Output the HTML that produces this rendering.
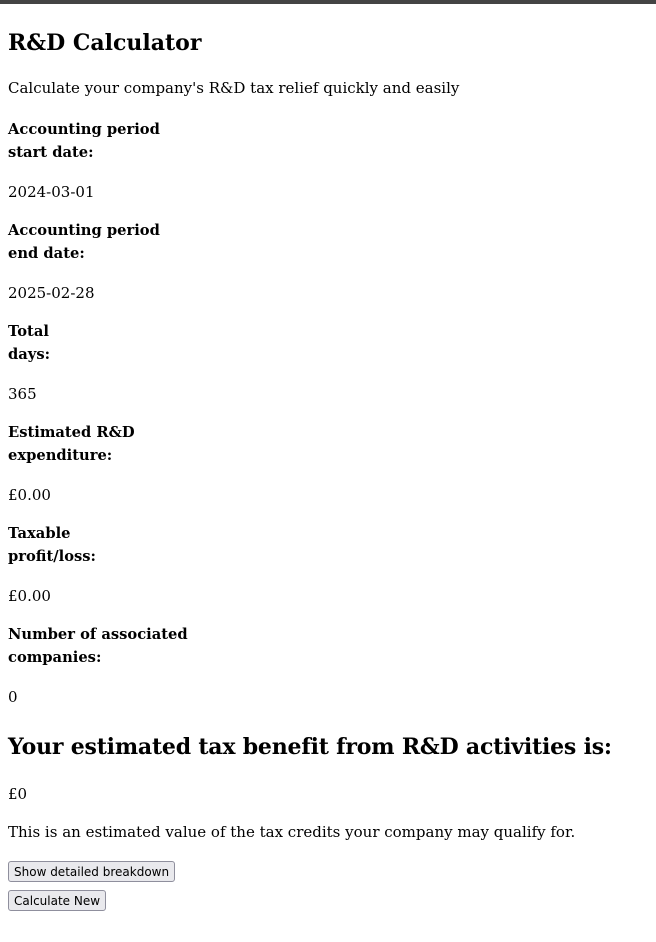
<!DOCTYPE html>
<html><head><meta charset="utf-8"><style>
body{margin:0;width:656px;height:942px;background:#fff;border-top:4px solid #444;box-sizing:border-box;position:relative;font-family:"DejaVu Serif","Liberation Serif",serif;color:#000;overflow:hidden}
.t{position:absolute;left:8px;font-size:15px;line-height:23px;white-space:nowrap}
.b{font-weight:bold;font-size:14.7px}
h1{position:absolute;left:8px;top:22px;margin:0;font-size:22px;line-height:34px}
h2{position:absolute;left:8px;top:726px;margin:0;font-size:22px;line-height:34px;letter-spacing:-0.2px}
button{position:absolute;left:8px;font-family:"DejaVu Sans","Liberation Sans",sans-serif;font-size:12px;height:21px;padding:0 5px;background:#e9e9ed;border:1px solid #8f8f9d;border-radius:3px;color:#000}
</style></head><body>
<h1>R&amp;D Calculator</h1>
<div class="t" style="top:73px">Calculate your company's R&amp;D tax relief quickly and easily</div>
<div class="t b" style="top:114px">Accounting period<br>start date:</div>
<div class="t" style="top:177px">2024-03-01</div>
<div class="t b" style="top:215px">Accounting period<br>end date:</div>
<div class="t" style="top:278px">2025-02-28</div>
<div class="t b" style="top:316px">Total<br>days:</div>
<div class="t" style="top:379px">365</div>
<div class="t b" style="top:417px">Estimated R&amp;D<br>expenditure:</div>
<div class="t" style="top:480px">£0.00</div>
<div class="t b" style="top:518px">Taxable<br>profit/loss:</div>
<div class="t" style="top:581px">£0.00</div>
<div class="t b" style="top:619px">Number of associated<br>companies:</div>
<div class="t" style="top:682px">0</div>
<h2>Your estimated tax benefit from R&amp;D activities is:</h2>
<div class="t" style="top:779px">£0</div>
<div class="t" style="top:817px">This is an estimated value of the tax credits your company may qualify for.</div>
<button style="top:857px">Show detailed breakdown</button>
<button style="top:886px">Calculate New</button>
</body></html>
